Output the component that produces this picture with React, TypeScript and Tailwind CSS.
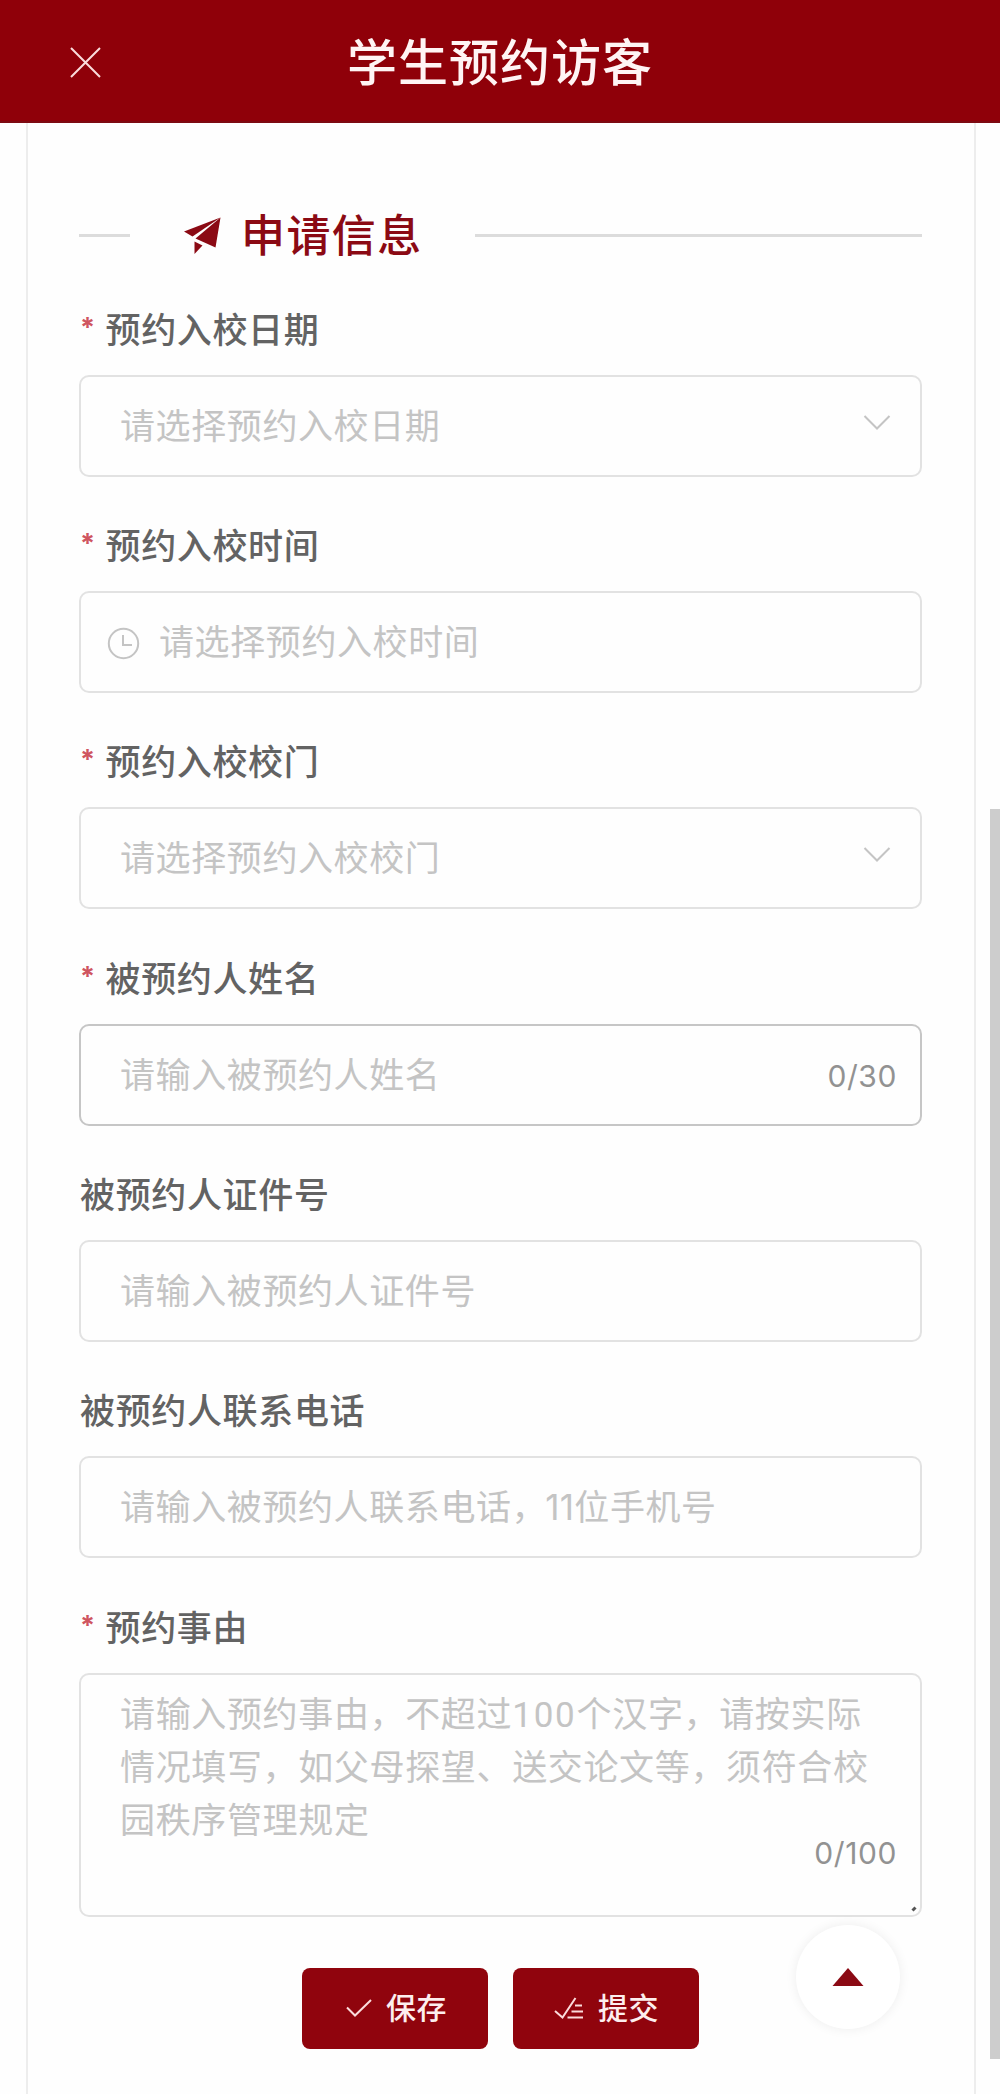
import type { ReactNode } from 'react';

interface FieldProps {
  label: string;
  required?: boolean;
  children: ReactNode;
}

function Field({ label, required, children }: FieldProps) {
  return (
    <div className="mb-[22.3px]">
      <div className="flex h-[92px] items-center pb-[2px] pl-[1px] text-[35px] font-medium tracking-[0.65px] text-[#636363]">
        {required && (
          <span className="w-[25.5px] font-['Inter'] text-[27px] leading-[40px] font-bold tracking-normal text-[#cf5560]">*</span>
        )}
        <span className="leading-[52px]">{label}</span>
      </div>
      {children}
    </div>
  );
}

interface InputBoxProps {
  placeholder: ReactNode;
  icon?: ReactNode;
  suffix?: ReactNode;
  active?: boolean;
}

function InputBox({ placeholder, icon, suffix, active }: InputBoxProps) {
  return (
    <div
      className={`flex h-[102px] items-center rounded-[10px] border-2 pr-[23px] ${
        active ? 'border-[#c6c6c6]' : 'border-[#e2e2e2]'
      } ${icon ? 'pl-[26px]' : 'pl-[39px]'}`}
    >
      {icon}
      <span className="h-[56px] flex-1 text-[35px] leading-[52px] tracking-[0.6px] text-[#c4c4c4]">{placeholder}</span>
      {suffix}
    </div>
  );
}

function ChevronDown() {
  return (
    <svg className="mt-[-6px] mr-[6px] h-[16px] w-[28px]" viewBox="0 0 28 16" fill="none" stroke="#c4c4c4" strokeWidth="2">
      <path d="M1.5 1 L14 13.5 L26.5 1" />
    </svg>
  );
}

function ClockIcon() {
  return (
    <svg className="mt-[3px] mr-[19px] h-[33px] w-[33px]" viewBox="0 0 33 33" fill="none" stroke="#c4c4c4" strokeWidth="2">
      <circle cx="16.5" cy="16.5" r="14.7" />
      <path d="M16 8 V18 H25" />
    </svg>
  );
}

function PlaneIcon() {
  return (
    <svg className="mt-[1px] h-[38px] w-[37px]" viewBox="0 0 37 38" fill="#8b0a14">
      <path d="M36.5 0.5 L0 14.5 L8.5 19.5 Z" />
      <path d="M36.5 0.5 L11.5 21.5 L31.5 30.5 Z" />
      <path d="M10.5 24.5 L18.5 28.5 L10.5 37 Z" />
    </svg>
  );
}

const buttonClass =
  'flex h-[81px] w-[186px] items-center rounded-[8px] bg-[#90040d] text-[30px] font-medium tracking-[0.4px] text-[#fdeeee]';

const counterClass = "font-['Inter'] text-[30px] leading-[40px] tracking-[0.6px] text-[#929292]";

export default function App() {
  return (
    <div className="relative h-[2094px] w-[1000px] overflow-hidden bg-[#fefefe] font-['Noto_Sans_CJK_SC',sans-serif]">
      <header className="flex h-[123px] items-center border-b-2 border-[#7d0a12] bg-[#8f0009]">
        <svg className="mt-[4px] ml-[70px] h-[31px] w-[31px]" viewBox="0 0 31 31" fill="none" stroke="#fbdcdc" strokeWidth="2">
          <path d="M1 1 L30 30 M30 1 L1 30" />
        </svg>
        <h1 className="mr-[101px] flex-1 pb-[3px] text-center text-[50px] leading-[72px] font-medium tracking-[1px] text-[#fff4f4]">
          学生预约访客
        </h1>
      </header>

      <main className="mr-[24px] ml-[26px] h-[1971px] border-x-2 border-[#ededed] pt-[72px] pr-[52px] pl-[51px]">
        <div className="mb-[7.8px] flex h-[80px] items-center">
          <span className="h-[3px] w-[51px] bg-[#dcdcdc]" />
          <span className="mr-[52px] ml-[54px] flex items-center gap-[20px]">
            <PlaneIcon />
            <span className="pb-[4px] text-[44px] leading-[64px] font-medium tracking-[1.4px] text-[#8b0a14]">申请信息</span>
          </span>
          <span className="h-[3px] flex-1 bg-[#dcdcdc]" />
        </div>

        <Field label="预约入校日期" required>
          <InputBox placeholder="请选择预约入校日期" suffix={<ChevronDown />} />
        </Field>
        <Field label="预约入校时间" required>
          <InputBox placeholder="请选择预约入校时间" icon={<ClockIcon />} />
        </Field>
        <Field label="预约入校校门" required>
          <InputBox placeholder="请选择预约入校校门" suffix={<ChevronDown />} />
        </Field>
        <Field label="被预约人姓名" required>
          <InputBox
            placeholder="请输入被预约人姓名"
            active
            suffix={<span className={`mt-[2px] ${counterClass}`}>0/30</span>}
          />
        </Field>
        <Field label="被预约人证件号">
          <InputBox placeholder="请输入被预约人证件号" />
        </Field>
        <Field label="被预约人联系电话">
          <InputBox
            placeholder={
              <>
                请输入被预约人联系电话，
                <span className="ml-[-2px] font-['Inter'] leading-none tracking-[0.3px]">11</span>位手机号
              </>
            }
          />
        </Field>
        <Field label="预约事由" required>
          <div className="relative h-[244px] rounded-[10px] border-2 border-[#e2e2e2] pt-[10px] pl-[39px] text-[35px] leading-[53px] tracking-[0.65px] whitespace-nowrap text-[#c4c4c4]">
            <p className="h-[53px]">
              请输入预约事由，不超过<span className="font-['Roboto'] leading-none tracking-[1.8px]">100</span>个汉字，请按实际
            </p>
            <p className="h-[53px]">情况填写，如父母探望、送交论文等，须符合校</p>
            <p className="h-[53px]">园秩序管理规定</p>
            <span className={`absolute right-[23px] bottom-[42px] ${counterClass}`}>0/100</span>
            <svg className="absolute right-[3px] bottom-[3px] h-[6px] w-[6px]" viewBox="0 0 6 6" stroke="#555555" strokeWidth="3">
              <path d="M1.5 4.5 L4.5 1.5" />
            </svg>
          </div>
        </Field>

        <div className="mt-[51px] flex gap-[25px] pl-[223px]">
          <button className={buttonClass}>
            <svg className="ml-[44px] h-[20px] w-[26px]" viewBox="0 0 26 20" fill="none" stroke="#fbdcdc" strokeWidth="2">
              <path d="M1 9.5 L9 17.5 L25 2" />
            </svg>
            <span className="ml-[14px] pb-[4px]">保存</span>
          </button>
          <button className={buttonClass}>
            <svg className="ml-[41px] h-[22px] w-[30px]" viewBox="0 0 30 22" fill="none" stroke="#fbdcdc" strokeWidth="2">
              <path d="M1 14 L8.5 20.5 L21.5 1 M21 8.5 H28 M17.5 14.5 H29 M13.5 20.5 H29" />
            </svg>
            <span className="ml-[14px] pb-[4px]">提交</span>
          </button>
        </div>
      </main>

      <button className="absolute top-[1925px] left-[796px] flex h-[104px] w-[104px] items-center justify-center rounded-full bg-white shadow-[0_0_12px_rgba(0,0,0,0.07)]">
        <svg className="h-[18px] w-[32px]" viewBox="0 0 32 18" fill="#8b0a14">
          <path d="M16 0 L31.5 18 H0.5 Z" />
        </svg>
      </button>

      <div className="absolute top-[809px] right-0 h-[1250px] w-[10px] bg-[#cdcdcd]" />
    </div>
  );
}
